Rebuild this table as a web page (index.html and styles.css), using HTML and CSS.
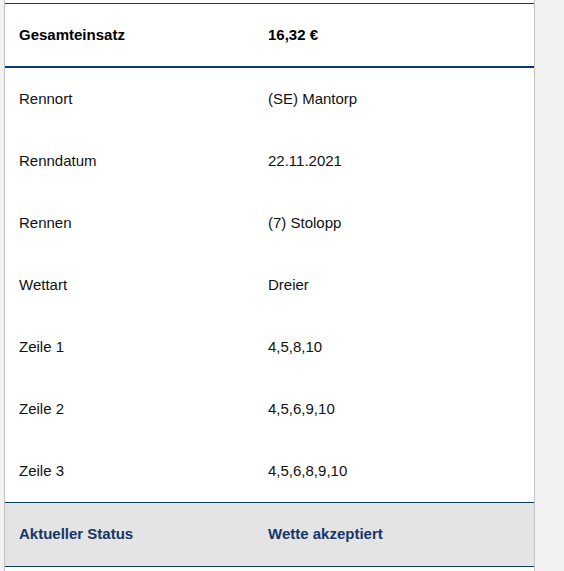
FILE: index.html
```html
<!DOCTYPE html>
<html lang="de">
<head>
<meta charset="utf-8">
<link rel="stylesheet" href="styles.css">
</head>
<body>
<div class="panel">
  <div class="table">
    <div class="row head"><div class="cell">Gesamteinsatz</div><div class="cell">16,32 €</div></div>
    <div class="row"><div class="cell">Rennort</div><div class="cell">(SE) Mantorp</div></div>
    <div class="row"><div class="cell">Renndatum</div><div class="cell">22.11.2021</div></div>
    <div class="row"><div class="cell">Rennen</div><div class="cell">(7) Stolopp</div></div>
    <div class="row"><div class="cell">Wettart</div><div class="cell">Dreier</div></div>
    <div class="row"><div class="cell">Zeile 1</div><div class="cell">4,5,8,10</div></div>
    <div class="row"><div class="cell">Zeile 2</div><div class="cell">4,5,6,9,10</div></div>
    <div class="row"><div class="cell">Zeile 3</div><div class="cell">4,5,6,8,9,10</div></div>
    <div class="row status"><div class="cell">Aktueller Status</div><div class="cell">Wette akzeptiert</div></div>
  </div>
</div>
</body>
</html>
```
FILE: styles.css
```css
html, body {
  margin: 0;
  padding: 0;
  background: #f2f2f2;
  font-family: "Liberation Sans", Arial, sans-serif;
  font-size: 15px;
  line-height: 18px;
  color: #111;
}
.panel {
  margin-left: 4px;
  width: 529px;
  min-height: 571px;
  background: #fff;
  border-left: 1px solid #c3c3c3;
  border-right: 1px solid #c3c3c3;
  padding-top: 3px;
  box-sizing: content-box;
}
.table {
  border-top: 1px solid #0b3a72;
}
.row {
  display: grid;
  grid-template-columns: 249px 1fr;
  height: 62px;
  align-items: center;
}
.cell {
  padding-left: 14px;
}
.head {
  border-bottom: 2px solid #0b3a72;
  font-weight: bold;
  color: #000;
}
.status {
  height: 63px;
  background: #e4e4e4;
  border-top: 1px solid #0b3a72;
  border-bottom: 1px solid #0b3a72;
  font-weight: bold;
  color: #14366a;
}
.status .cell {
  padding-bottom: 1px;
}
```
